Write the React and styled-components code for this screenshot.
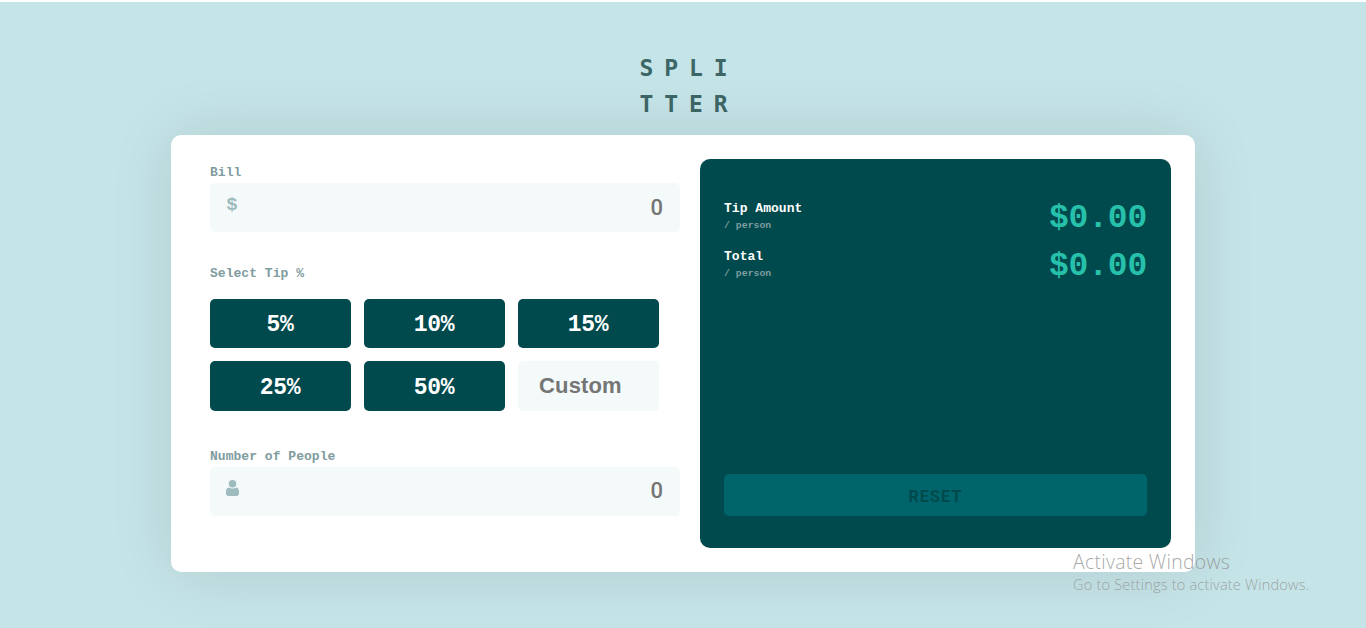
import React from "react";
import styled, { createGlobalStyle } from "styled-components";

const mono = '"Liberation Mono", "DejaVu Sans Mono", monospace';
const display = '"DejaVu Sans Mono", "Liberation Mono", monospace';
const sans = '"Liberation Sans", Arial, sans-serif';

const GlobalStyle = createGlobalStyle`
  *, *::before, *::after { box-sizing: border-box; }
  body { margin: 0; background: #c5e4e7; font-family: ${mono}; overflow: hidden; }
`;

const Page = styled.main`
  height: 628px;
  border-top: 2px solid #fff;
  display: flex;
  flex-direction: column;
  align-items: center;
`;

const Logo = styled.h1`
  margin: 48px 0 0 12px;
  height: 85px;
  font: 700 23px/36px ${display};
  letter-spacing: 10.9px;
  color: #3d6666;
`;

const Card = styled.section`
  display: flex;
  gap: 20px;
  width: 1024px;
  height: 437px;
  padding: 24px 24px 24px 39px;
  border-radius: 10px;
  background: #fff;
  box-shadow: 0 0 65px rgba(0, 0, 0, 0.1);
`;

const Form = styled.div`
  width: 470px;
  display: flex;
  flex-direction: column;
`;

const Label = styled.label`
  display: block;
  height: ${(p) => p.$height || 20}px;
  margin-top: ${(p) => p.$top}px;
  font: 700 13px/19px ${mono};
  letter-spacing: 0.03px;
  color: #7f9c9f;
`;

const Field = styled.div`
  display: flex;
  align-items: flex-start;
  justify-content: space-between;
  height: 49px;
  padding: 0 17px 0 16px;
  border-radius: 5px;
  background: #f4fafa;
`;

const Dollar = styled.span`
  width: 12px;
  padding-top: 12px;
  font: 700 19px/20px ${mono};
  text-align: center;
  color: #9ebbbd;
`;

const PersonIcon = styled.svg`
  display: block;
  width: 13px;
  height: 16px;
  margin-top: 13px;
  fill: #9ebbbd;
`;

const Input = styled.input`
  width: 400px;
  height: ${(p) => p.$height || 48}px;
  padding: 0;
  border: 0;
  outline: 0;
  background: transparent;
  text-align: right;
  font: ${(p) => p.$font || `500 22px Roboto, ${sans}`};
  &::placeholder { color: #757575; opacity: 1; }
`;

const Tips = styled.div`
  display: grid;
  grid-template-columns: repeat(3, 141px);
  grid-template-rows: 49px 50px;
  gap: 13px;
`;

const TipButton = styled.button`
  padding: 3px 1px 0 0;
  border: 0;
  border-radius: 5px;
  background: #00494d;
  color: #fff;
  font: 700 23px ${mono};
  letter-spacing: -0.3px;
`;

const CustomInput = styled(Input)`
  width: 141px;
  height: 50px;
  padding: 0 21px;
  border-radius: 5px;
  background: #f4fafa;
  text-align: left;
  letter-spacing: 0.15px;
`;

const Result = styled.div`
  display: flex;
  flex-direction: column;
  width: 471px;
  height: 389px;
  padding: 34px 24px 32px;
  border-radius: 10px;
  background: #00494d;
`;

const ResultRow = styled.div`
  display: flex;
  justify-content: space-between;
  height: 48px;
`;

const ResultName = styled.div`
  padding-top: 6px;
  font: 700 13px/19px ${mono};
  letter-spacing: 0.03px;
  color: #fff;
`;

const PerPerson = styled.div`
  font: 700 9.8px/15px ${mono};
  color: #7f9c9f;
`;

const Amount = styled.div`
  padding-top: 2px;
  font: 700 33px/48px ${mono};
  letter-spacing: -0.2px;
  color: #26c0ab;
`;

const Reset = styled.button`
  height: 42px;
  margin-top: auto;
  padding: 3px 0 0;
  border: 0;
  border-radius: 5px;
  background: #00656a;
  color: #00494d;
  font: 700 16px Roboto, ${sans};
  letter-spacing: 1.2px;
`;

const Watermark = styled.aside`
  position: absolute;
  left: 1073px;
  top: 548px;
  font-family: "Open Sans", "Noto Sans", sans-serif;
  font-weight: 300;
  white-space: nowrap;
  color: rgba(145, 145, 145, 0.8);
`;

const WatermarkTitle = styled.div`
  font-size: 19.5px;
  line-height: 28px;
  letter-spacing: 0.26px;
`;

const WatermarkText = styled.div`
  font-size: 14.5px;
  line-height: 18px;
  letter-spacing: 0.22px;
`;

const results = ["Tip Amount", "Total"];

export default function App() {
  return (
    <>
      <GlobalStyle />
      <Page>
        <Logo>SPLI<br />TTER</Logo>
        <Card>
          <Form>
            <Label $top={4} htmlFor="bill">Bill</Label>
            <Field>
              <Dollar>$</Dollar>
              <Input id="bill" placeholder="0" />
            </Field>
            <Label as="div" $top={32} $height={35}>Select Tip %</Label>
            <Tips>
              {[5, 10, 15, 25, 50].map((n) => <TipButton key={n}>{n}%</TipButton>)}
              <CustomInput $font={`700 22px ${sans}`} placeholder="Custom" />
            </Tips>
            <Label $top={36} htmlFor="people">Number of People</Label>
            <Field>
              <PersonIcon viewBox="0 0 13 16">
                <circle cx="6.5" cy="3.8" r="3.8" />
                <path d="M2.700 7.600C1 7.800 0 9.500 0 12v1.500C0 15 1 16 2.500 16h8c1.500 0 2.500-1 2.500-2.500V12c0-2.500-1-4.200-2.700-4.400C9.300 8.200 8 8.500 6.500 8.500S3.700 8.200 2.700 7.600z" />
              </PersonIcon>
              <Input id="people" placeholder="0" $height={46} />
            </Field>
          </Form>
          <Result>
            {results.map((name) => (
              <ResultRow key={name}>
                <ResultName>
                  {name}
                  <PerPerson>/ person</PerPerson>
                </ResultName>
                <Amount>$0.00</Amount>
              </ResultRow>
            ))}
            <Reset>RESET</Reset>
          </Result>
        </Card>
      </Page>
      <Watermark>
        <WatermarkTitle>Activate Windows</WatermarkTitle>
        <WatermarkText>Go to Settings to activate Windows.</WatermarkText>
      </Watermark>
    </>
  );
}
